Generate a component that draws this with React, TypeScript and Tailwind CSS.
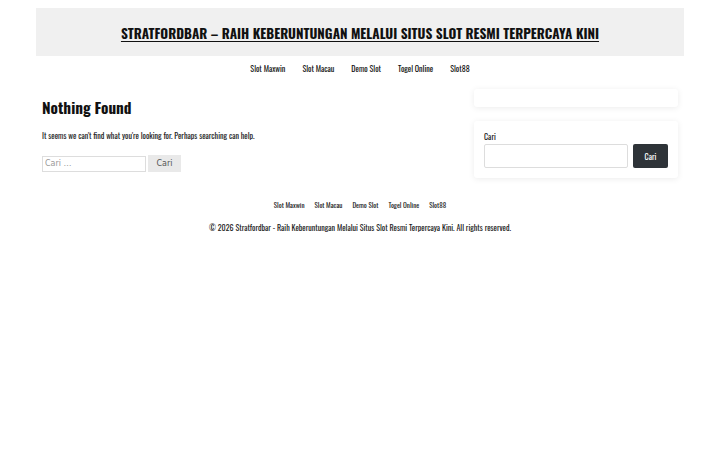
const cond = "font-['Oswald','Liberation_Sans_Narrow','DejaVu_Sans_Condensed',sans-serif]";

const navItems = ["Slot Maxwin", "Slot Macau", "Demo Slot", "Togel Online", "Slot88"];

export default function App() {
  return (
    <div className={`min-h-[450px] bg-white text-[#222] ${cond}`}>
      <div className="mx-9 pt-2">
        {/* Header */}
        <header className="flex h-12 items-center justify-center bg-[#f0f0f0] pt-[4px]">
          <a className="text-[13.4px] font-bold uppercase leading-none text-[#111] underline underline-offset-2">
            Stratfordbar – Raih Keberuntungan Melalui Situs Slot Resmi Terpercaya Kini
          </a>
        </header>

        {/* Primary nav */}
        <nav className="flex h-6 items-center justify-center gap-[17px] text-[8px] text-[#111]">
          {navItems.map((n) => (
            <span key={n}>{n}</span>
          ))}
        </nav>

        <div className="mt-2 flex px-[6px]">
          {/* Main */}
          <main className="flex-1 pt-[12px]">
            <h1 className="text-[15.3px] font-bold leading-none text-[#111]">Nothing Found</h1>
            <p className="mt-[14px] text-[8px] leading-[12px] text-[#222]">
              It seems we can't find what you're looking for. Perhaps searching can help.
            </p>
            <form className="mt-[14px] flex items-center gap-[2px]">
              <input
                placeholder="Cari …"
                className="h-4 w-[104px] border border-[#ddd] px-[2px] font-['DejaVu_Sans',sans-serif] text-[8px] text-[#333] placeholder:text-[#999]"
              />
              <button className="h-[17px] w-[33px] bg-[#e9e9e9] font-['DejaVu_Sans',sans-serif] text-[8px] text-[#555]">
                Cari
              </button>
            </form>
          </main>

          {/* Sidebar */}
          <aside className="w-[204px] pt-[1px]">
            <div className="h-[18px] rounded-[3px] bg-white shadow-[0_1px_6px_rgba(0,0,0,0.08)]" />
            <div className="mt-[14px] rounded-[3px] bg-white px-[10px] pb-[10px] pt-[11px] shadow-[0_1px_6px_rgba(0,0,0,0.08)]">
              <label className="block text-[8px] leading-none text-[#222]">Cari</label>
              <div className="mt-[4px] flex gap-[5px]">
                <input className="h-6 min-w-0 flex-1 rounded-[2px] border border-[#ddd]" />
                <button className="h-6 w-[35px] shrink-0 rounded-[2px] bg-[#2e3338] text-[8px] text-white">Cari</button>
              </div>
            </div>
          </aside>
        </div>

        {/* Footer */}
        <footer className="mt-[22px] flex flex-col items-center">
          <div className="flex gap-[10px] text-[7px] text-[#222]">
            {navItems.map((n) => (
              <span key={n}>{n}</span>
            ))}
          </div>
          <p className="mt-[10px] text-[8px] text-[#222]">
            © 2026 Stratfordbar - Raih Keberuntungan Melalui Situs Slot Resmi Terpercaya Kini. All rights reserved.
          </p>
        </footer>
      </div>
    </div>
  );
}
